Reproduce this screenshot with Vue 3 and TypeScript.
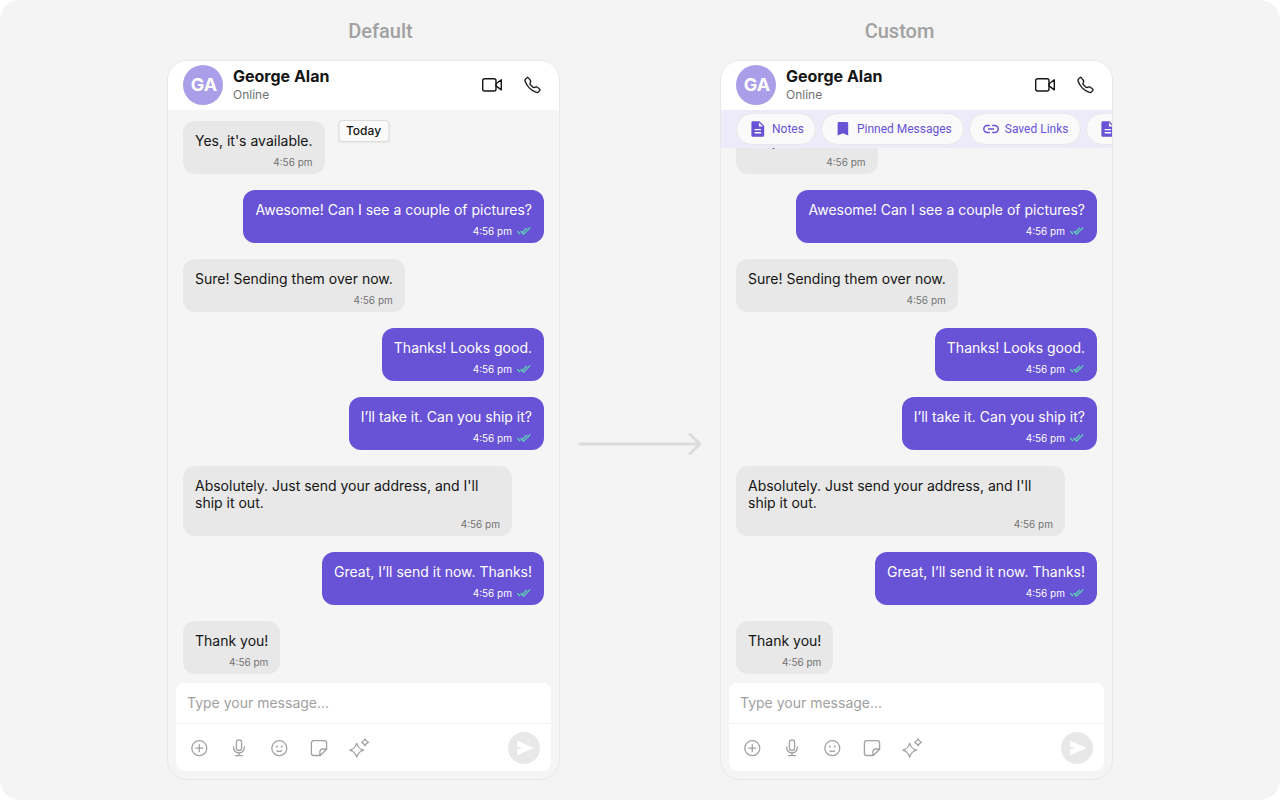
<script setup lang="ts">
import { ref } from 'vue'

interface Message {
  text: string
  time: string
  mine: boolean
}

interface Panel {
  id: string
  title: string
  custom: boolean
}

const panels: Panel[] = [
  { id: 'default', title: 'Default', custom: false },
  { id: 'custom', title: 'Custom', custom: true },
]

const messages: Message[] = [
  { text: "Yes, it's available.", time: '4:56 pm', mine: false },
  { text: 'Awesome! Can I see a couple of pictures?', time: '4:56 pm', mine: true },
  { text: 'Sure! Sending them over now.', time: '4:56 pm', mine: false },
  { text: 'Thanks! Looks good.', time: '4:56 pm', mine: true },
  { text: 'I’ll take it. Can you ship it?', time: '4:56 pm', mine: true },
  { text: "Absolutely. Just send your address, and I'll ship it out.", time: '4:56 pm', mine: false },
  { text: 'Great, I’ll send it now. Thanks!', time: '4:56 pm', mine: true },
  { text: 'Thank you!', time: '4:56 pm', mine: false },
]

const chips = [
  { label: 'Notes', icon: 'doc' },
  { label: 'Pinned Messages', icon: 'bookmark' },
  { label: 'Saved Links', icon: 'link' },
  { label: '', icon: 'doc' },
]

const tools = [
  { label: 'Attach', icon: 'plus' },
  { label: 'Record voice', icon: 'mic' },
  { label: 'Emoji', icon: 'smile' },
  { label: 'Sticker', icon: 'sticker' },
  { label: 'AI assist', icon: 'sparkle' },
]

const drafts = ref<Record<string, string>>({ default: '', custom: '' })
</script>

<template>
  <main class="page">
    <div class="compare">
      <template v-for="(panel, index) in panels" :key="panel.id">
        <div v-if="index > 0" class="between">
          <svg class="arrow" viewBox="0 0 124 24" aria-hidden="true">
            <path d="M2 12H121M112 2.500l10 9.500-10 9.500" />
          </svg>
        </div>
        <section class="column">
          <h2 class="title">{{ panel.title }}</h2>
          <div class="panel">
            <header class="head">
              <div class="avatar">GA</div>
              <div class="who">
                <h3 class="name">George Alan</h3>
                <p class="status">Online</p>
              </div>
              <div class="calls">
                <button type="button" class="icon-button" aria-label="Video call">
                  <svg width="24" height="24" viewBox="0 0 24 24" aria-hidden="true">
                    <rect x="2.700" y="5.700" width="13.300" height="12.300" rx="2" />
                    <path d="M16 10.800l5.300-4v10.100l-5.300-4z" />
                  </svg>
                </button>
                <button type="button" class="icon-button" aria-label="Voice call">
                  <svg class="solid" width="24" height="24" viewBox="-4.500 -4 24 24" aria-hidden="true">
                    <path
                      d="M3.654 1.328a.678.678 0 0 0-1.015-.063L1.605 2.3c-.483.484-.661 1.169-.45 1.770a17.568 17.568 0 0 0 4.168 6.608 17.569 17.569 0 0 0 6.608 4.168c.601.211 1.286.033 1.770-.45l1.034-1.034a.678.678 0 0 0-.063-1.015l-2.307-1.794a.678.678 0 0 0-.58-.122l-2.190.547a1.745 1.745 0 0 1-1.657-.459L5.482 8.062a1.745 1.745 0 0 1-.46-1.657l.548-2.190a.678.678 0 0 0-.122-.58L3.654 1.328zM1.884.511a1.745 1.745 0 0 1 2.612.163L6.290 2.980c.329.423.445.974.315 1.494l-.547 2.190a.678.678 0 0 0 .178.643l2.457 2.457a.678.678 0 0 0 .644.178l2.189-.547a1.745 1.745 0 0 1 1.494.315l2.306 1.794c.829.645.905 1.870.163 2.611l-1.034 1.034c-.74.74-1.846 1.065-2.877.702a18.634 18.634 0 0 1-7.010-4.420 18.634 18.634 0 0 1-4.420-7.009c-.362-1.030-.037-2.137.703-2.877L1.885.511z"
                    />
                  </svg>
                </button>
              </div>
            </header>

            <nav v-if="panel.custom" class="chips" aria-label="Shortcuts">
              <button
                v-for="(chip, i) in chips"
                :key="i"
                type="button"
                class="chip"
                :aria-label="chip.label || 'More'"
              >
                <svg width="16" height="16" viewBox="0 0 16 16" aria-hidden="true">
                  <path
                    v-if="chip.icon === 'doc'"
                    fill-rule="evenodd"
                    d="M3 .2h6.500L14.200 5v9.200c0 .9-.7 1.600-1.600 1.600H3c-.9 0-1.600-.7-1.600-1.600V1.800C1.400.9 2.100.2 3 .2zM8.900 1.500v4h4zM4.600 7.900v1.300h6.500V7.900zM4.600 11.100v1.300h6.500v-1.300z"
                  />
                  <path
                    v-else-if="chip.icon === 'bookmark'"
                    d="M4 1h7.800c.8 0 1.400.6 1.400 1.400v12.200L7.900 12.300 2.600 14.600V2.400C2.600 1.600 3.200 1 4 1z"
                  />
                  <path
                    v-else
                    class="line"
                    d="M6.800 4.600H4.200a3.400 3.400 0 0 0 0 6.800h2.600M9.200 4.600h2.600a3.400 3.400 0 0 1 0 6.800H9.200M5 8h6"
                  />
                </svg>
                {{ chip.label }}
              </button>
            </nav>

            <div class="thread">
              <span v-if="!panel.custom" class="day">Today</span>
              <div
                v-for="message in messages"
                :key="message.text"
                class="bubble"
                :class="{ mine: message.mine }"
              >
                <p class="text">{{ message.text }}</p>
                <div class="meta">
                  <time>{{ message.time }}</time>
                  <svg v-if="message.mine" width="16" height="12" viewBox="0 0 16 12" aria-hidden="true">
                    <path d="M1.200 6.200l3 3M4.500 6.200l3 3 6.800-6.800M6.200 7.400l4.600-4.600" />
                  </svg>
                </div>
              </div>
            </div>

            <form class="composer" @submit.prevent>
              <input
                v-model="drafts[panel.id]"
                class="field"
                type="text"
                placeholder="Type your message..."
                aria-label="Message"
              />
              <div class="tools">
                <button
                  v-for="tool in tools"
                  :key="tool.icon"
                  type="button"
                  class="tool"
                  :aria-label="tool.label"
                >
                  <svg width="24" height="24" viewBox="0 0 24 24" aria-hidden="true">
                    <template v-if="tool.icon === 'plus'">
                      <circle cx="12.300" cy="12.200" r="7.500" />
                      <path d="M12.300 8.700v7M8.800 12.200h7" />
                    </template>
                    <template v-else-if="tool.icon === 'mic'">
                      <rect x="9.400" y="3.800" width="5.200" height="10.700" rx="2.600" />
                      <path d="M6.600 11v.6a5.400 5.400 0 0 0 10.800 0V11M12 17v2.600M8.500 19.600h7" />
                    </template>
                    <template v-else-if="tool.icon === 'smile'">
                      <circle cx="12.300" cy="12.200" r="7.500" />
                      <path d="M10 14.700c1 .9 3.600.9 4.600 0" />
                      <circle class="dot" cx="9.900" cy="10.500" r="1" />
                      <circle class="dot" cx="14.700" cy="10.500" r="1" />
                    </template>
                    <template v-else-if="tool.icon === 'sticker'">
                      <path
                        d="M6.700 4.700h10.600a2.300 2.300 0 0 1 2.300 2.300v6.300l-6.300 6.200H6.700a2.300 2.300 0 0 1-2.300-2.300V7a2.300 2.300 0 0 1 2.300-2.300zM12.900 19.300v-3.700a2.600 2.600 0 0 1 2.600-2.600h3.900"
                      />
                    </template>
                    <template v-else>
                      <path
                        d="M9.700 7.300c1.300 4.200 2.700 5.600 6.900 6.900-4.200 1.300-5.600 2.700-6.900 6.900-1.300-4.200-2.700-5.600-6.900-6.900 4.200-1.300 5.600-2.700 6.900-6.900zM18 2.900c.7 2 1.400 2.700 3.400 3.400-2 .7-2.700 1.400-3.400 3.400-.7-2-1.400-2.700-3.400-3.400 2-.7 2.700-1.400 3.400-3.400z"
                      />
                    </template>
                  </svg>
                </button>
                <button type="submit" class="send" aria-label="Send">
                  <svg width="18" height="16" viewBox="0 0 18 16" aria-hidden="true">
                    <path d="M2.200 1.500c0-.5.400-.7.900-.5l14.200 6.300c.6.300.6 1 0 1.300L3.100 14.900c-.5.200-.9 0-.9-.5V9.300L8 8 2.200 6.700z" />
                  </svg>
                </button>
              </div>
            </form>
          </div>
        </section>
      </template>
    </div>
  </main>
</template>

<style>
body {
  margin: 0;
  background: #fff;
}
</style>

<style scoped>
* {
  box-sizing: border-box;
}

h2,
h3,
p {
  margin: 0;
}

button {
  margin: 0;
  padding: 0;
  border: 0;
  background: none;
  font: inherit;
  cursor: pointer;
}

svg {
  display: block;
  flex: none;
}

.page {
  min-height: 100vh;
  padding: 20px;
  border-radius: 20px;
  background: #f4f4f4;
  font-family: Inter, 'Liberation Sans', sans-serif;
  color: #141414;
}

.compare {
  display: flex;
  max-width: 946px;
  margin: 0 auto;
}

.column {
  flex: 1 1 0;
  min-width: 0;
  display: flex;
  flex-direction: column;
  gap: 18px;
}

.title {
  font: 500 20px/22px Roboto, sans-serif;
  color: #a1a1a1;
  text-align: center;
  padding-right: 34px;
}

.column:first-child .title {
  padding-right: 0;
  padding-left: 34px;
}

.between {
  flex: 0 0 160px;
  display: flex;
  align-items: center;
  justify-content: center;
  padding-top: 88px;
}

.arrow {
  width: 124px;
  height: 24px;
  fill: none;
  stroke: #dcdcdc;
  stroke-width: 3;
  stroke-linecap: round;
  stroke-linejoin: round;
}

.panel {
  display: flex;
  flex-direction: column;
  min-height: calc(100vh - 80px);
  border: 1px solid #e8e8e8;
  border-radius: 20px;
  background: #f5f5f5;
  overflow: hidden;
}

.head {
  display: flex;
  align-items: center;
  height: 49px;
  padding: 0 15px 1px;
  background: #fff;
}

.avatar {
  width: 40px;
  height: 40px;
  padding-left: 2px;
  border-radius: 50%;
  background: #aa9ee8;
  color: #fff;
  font-size: 18px;
  font-weight: 700;
  line-height: 40px;
  text-align: center;
}

.who {
  flex: 1;
  padding-left: 10px;
}

.name {
  font-size: 16px;
  font-weight: 700;
  line-height: 20px;
}

.status {
  font-size: 12px;
  line-height: 18px;
  color: #727272;
}

.calls {
  display: flex;
  gap: 16px;
}

.icon-button {
  display: grid;
  place-items: center;
  width: 24px;
  height: 24px;
}

.icon-button svg {
  fill: none;
  stroke: #141414;
  stroke-width: 1.4;
  stroke-linejoin: round;
}

.icon-button .solid {
  fill: #141414;
  stroke-width: 0.3;
}

.chips {
  display: flex;
  gap: 5px;
  padding: 3px 0 3px 15px;
  background: #edeafa;
  overflow: hidden;
}

.chip {
  display: flex;
  flex: none;
  align-items: center;
  gap: 6px;
  height: 32px;
  padding: 0 11px 0 13px;
  border: 1px solid #e8e8e8;
  border-radius: 16px;
  background: #fafafa;
  color: #6852d6;
  font: 400 12px/18px Roboto, sans-serif;
  white-space: nowrap;
}

.chip svg {
  fill: #6852d6;
}

.chip .line {
  fill: none;
  stroke: #6852d6;
  stroke-width: 1.5;
}

.thread {
  position: relative;
  flex: 1 1 0;
  min-height: 0;
  display: flex;
  flex-direction: column;
  justify-content: flex-end;
  align-items: flex-start;
  gap: 16px;
  padding: 0 15px 9px;
  overflow: hidden;
}

.day {
  position: absolute;
  top: 10px;
  left: 50%;
  transform: translateX(-50%);
  padding: 2px 7px;
  border: 1px solid #dcdcdc;
  border-radius: 4px;
  background: #fafafa;
  box-shadow: 0 1px 2px rgba(0, 0, 0, 0.06);
  font-size: 12px;
  font-weight: 500;
  line-height: 16px;
}

.bubble {
  flex: none;
  max-width: 329px;
  padding: 11px 12px 6px;
  border-radius: 12px;
  background: #e8e8e8;
}

.bubble.mine {
  align-self: flex-end;
  background: #6852d6;
  color: #fff;
}

.text {
  font-size: 14px;
  line-height: 17px;
}

.meta {
  display: flex;
  align-items: center;
  justify-content: flex-end;
  gap: 4px;
  margin-top: 7px;
  font-size: 10px;
  line-height: 12px;
  color: #727272;
}

.mine .meta {
  color: #fff;
}

.meta svg {
  fill: none;
  stroke: #5be0ae;
  stroke-width: 1.2;
}

.composer {
  margin: 0 8px 8px;
  border-radius: 8px;
  background: #fff;
  overflow: hidden;
}

.field {
  display: block;
  width: 100%;
  height: 40px;
  padding: 0 11px 2px;
  border: 0;
  outline: 0;
  background: none;
  color: #141414;
  font: 400 14px/18px Inter, 'Liberation Sans', sans-serif;
}

.field::placeholder {
  color: #a1a1a1;
  opacity: 1;
}

.tools {
  display: flex;
  align-items: center;
  gap: 16px;
  height: 48px;
  padding: 0 11px;
  border-top: 1px solid #f5f5f5;
}

.tool svg {
  fill: none;
  stroke: #a1a1a1;
  stroke-width: 1.3;
  stroke-linecap: round;
  stroke-linejoin: round;
}

.tool .dot {
  fill: #a1a1a1;
  stroke: none;
}

.send {
  display: grid;
  place-items: center;
  width: 32px;
  height: 32px;
  margin-left: auto;
  border-radius: 50%;
  background: #e8e8e8;
}

.send svg {
  fill: #fff;
}
</style>
